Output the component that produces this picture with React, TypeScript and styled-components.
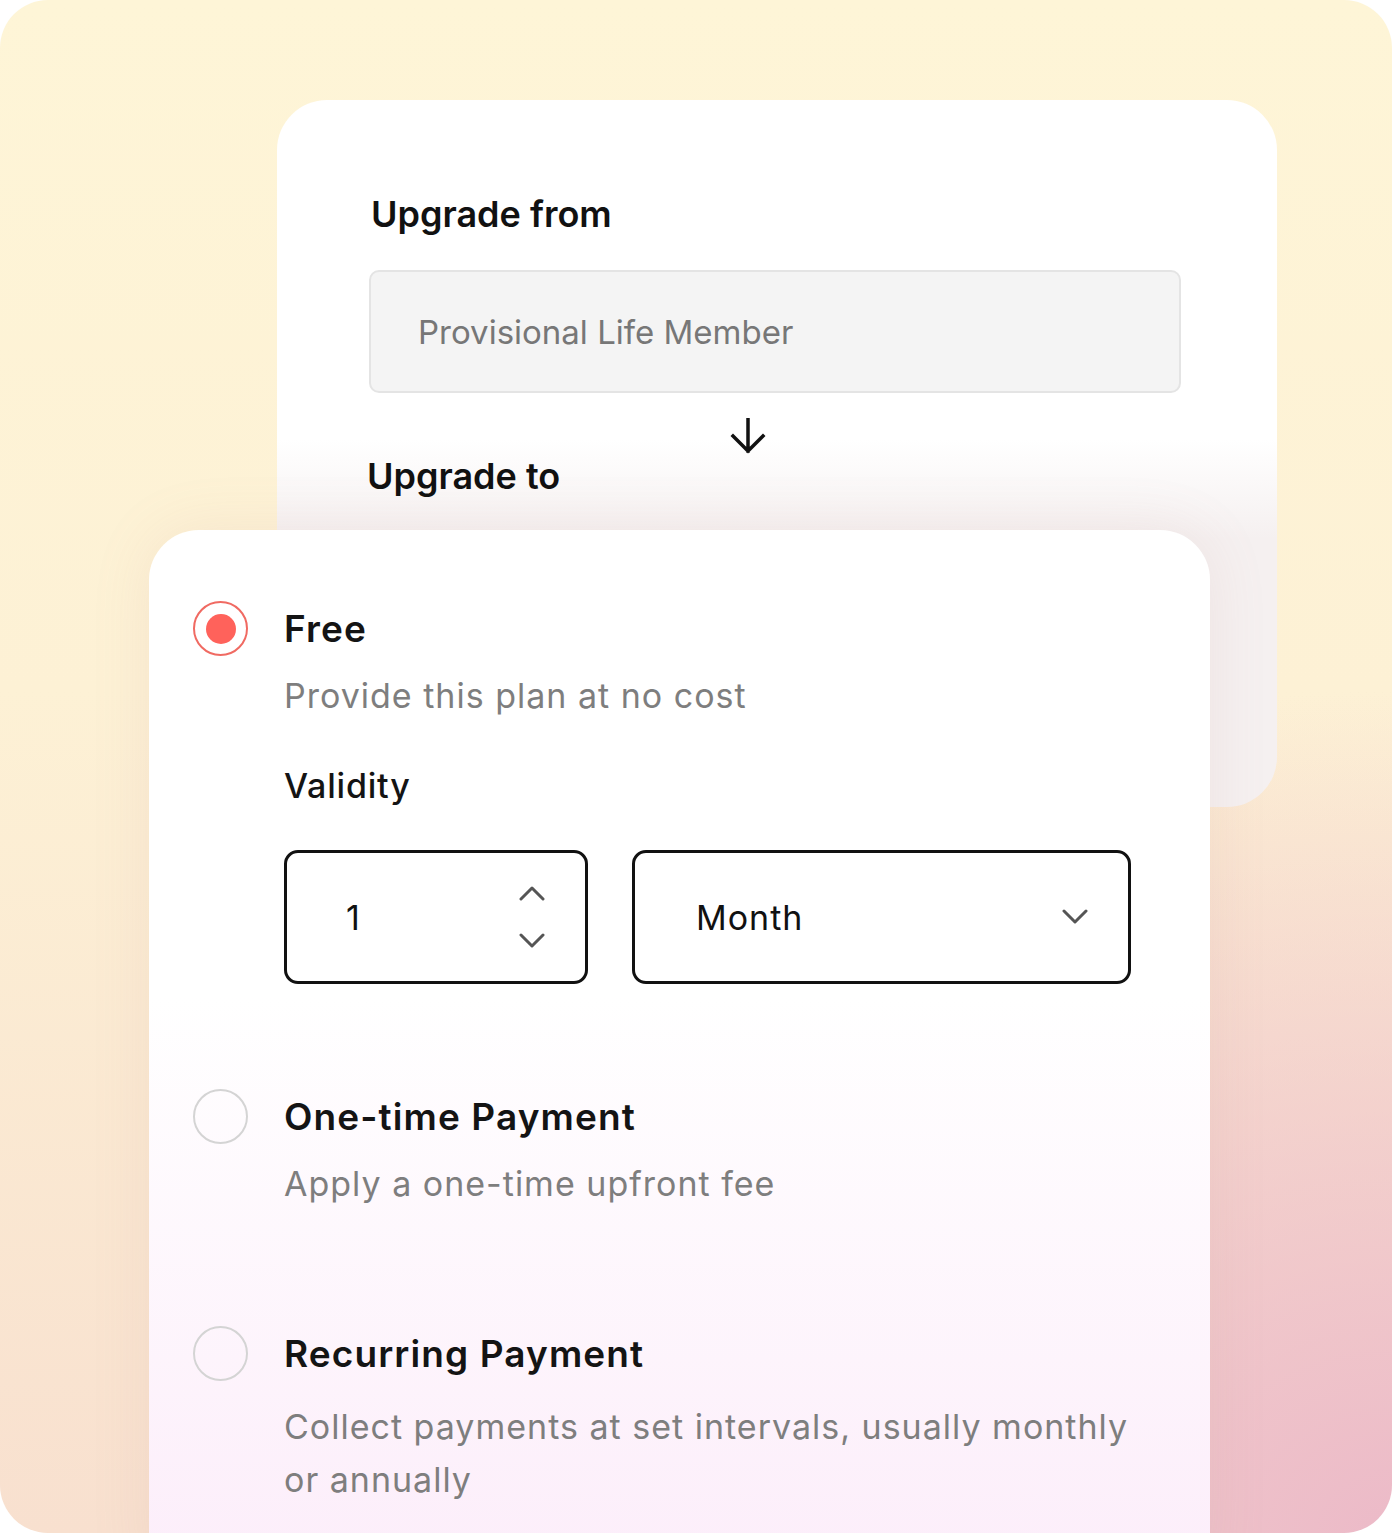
import React, { useState } from 'react'
import styled, { createGlobalStyle } from 'styled-components'

const GlobalStyle = createGlobalStyle`
  body {
    margin: 0;
    background: #ffffff;
    font-family: Inter, 'Noto Sans', sans-serif;
  }
`

const Frame = styled.div`
  width: 1392px;
  height: 1533px;
  border-radius: 48px;
  overflow: hidden;
  padding-top: 100px;
  box-sizing: border-box;
  background: radial-gradient(
      ellipse 70% 55% at 100% 100%,
      #ecbac8 0%,
      rgba(236, 186, 200, 0) 100%
    ),
    linear-gradient(180deg, #fef5d7 0%, #fdf1d5 45%, #f8e0cf 100%);
`

const BackCard = styled.section`
  margin-left: 277px;
  width: 1000px;
  height: 707px;
  box-sizing: border-box;
  padding: 92px 0 0 92px;
  border-radius: 50px;
  background: linear-gradient(180deg, #ffffff 0%, #ffffff 48%, #f5f0f0 62%, #f5f0f0 100%);
`

const Heading = styled.h2<{ $shift?: number }>`
  margin: 0;
  margin-left: ${({ $shift = 2 }) => $shift}px;
  font-size: 36px;
  line-height: 44px;
  font-weight: 600;
  color: #111111;
`

const ReadOnlyField = styled.div`
  margin-top: 34px;
  width: 812px;
  height: 123px;
  box-sizing: border-box;
  display: flex;
  align-items: center;
  padding-left: 47px;
  border: 2px solid #e4e4e4;
  border-radius: 10px;
  background: #f4f4f4;
  font-size: 33px;
  color: #777777;
`

const ArrowRow = styled.div`
  margin-top: 25px;
  margin-bottom: 2px;
  height: 34px;
  padding-left: 361px;
  display: flex;
`

const FrontCard = styled.section`
  position: relative;
  z-index: 1;
  margin-top: -277px;
  margin-left: 149px;
  width: 1061px;
  height: 1060px;
  box-sizing: border-box;
  padding: 71px 0 0 44px;
  border-radius: 50px;
  background: linear-gradient(180deg, #ffffff 0%, #ffffff 44%, #fcedfa 100%);
  box-shadow: 0 0 60px rgba(190, 140, 130, 0.12);
`

const Option = styled.div<{ $gap: number }>`
  display: grid;
  grid-template-columns: 55px 1fr;
  column-gap: 36px;
  margin-top: ${({ $gap }) => $gap}px;
`

const Radio = styled.button<{ $checked: boolean }>`
  width: 55px;
  height: 55px;
  padding: 0;
  border-radius: 50%;
  box-sizing: border-box;
  border: 2.5px solid ${({ $checked }) => ($checked ? '#f06a62' : '#d4d4d4')};
  background: transparent;
  display: flex;
  align-items: center;
  justify-content: center;
  cursor: pointer;

  &::after {
    content: '';
    width: 30px;
    height: 30px;
    border-radius: 50%;
    background: #ff625b;
    display: ${({ $checked }) => ($checked ? 'block' : 'none')};
  }
`

const OptionTitle = styled.div`
  align-self: center;
  font-size: 37px;
  line-height: 44px;
  font-weight: 600;
  letter-spacing: 1.1px;
  color: #141414;
`

const OptionBody = styled.div`
  grid-column: 2;
`

const Description = styled.p<{ $top: number }>`
  margin: ${({ $top }) => $top}px 0 0;
  font-size: 34px;
  line-height: 53px;
  letter-spacing: 1px;
  color: #7e7e7e;
  max-width: 860px;
`

const FieldLabel = styled.div`
  margin-top: 42px;
  font-size: 34px;
  line-height: 44px;
  font-weight: 500;
  letter-spacing: 0.8px;
  color: #141414;
`

const FieldRow = styled.div`
  margin-top: 42px;
  display: flex;
  gap: 44px;
`

const Box = styled.div<{ $width: number }>`
  width: ${({ $width }) => $width}px;
  height: 134px;
  box-sizing: border-box;
  border: 3px solid #111111;
  border-radius: 14px;
  display: flex;
  align-items: center;
  justify-content: space-between;
  font-size: 34px;
  letter-spacing: 1px;
  color: #111111;
`

const NumberValue = styled.span`
  padding-left: 59px;
`

const SelectValue = styled.span`
  padding-left: 61px;
`

const Stepper = styled.div`
  display: flex;
  flex-direction: column;
  gap: 32px;
  padding-right: 40px;
`

const Caret = styled.svg`
  display: block;
`

const ChevronUp = () => (
  <Caret width="26" height="16" viewBox="0 0 26 16" fill="none">
    <path d="M2 14 L13 3 L24 14" stroke="#555" strokeWidth="3" strokeLinecap="round" strokeLinejoin="round" />
  </Caret>
)

const ChevronDown = () => (
  <Caret width="26" height="16" viewBox="0 0 26 16" fill="none">
    <path d="M2 2 L13 13 L24 2" stroke="#555" strokeWidth="3" strokeLinecap="round" strokeLinejoin="round" />
  </Caret>
)

const SelectCaret = styled.span`
  padding-right: 40px;
`

const ArrowDown = () => (
  <svg width="36" height="36" viewBox="0 0 36 36" fill="none">
    <path d="M18 1 V33 M3 18 L18 33 L33 18" stroke="#111" strokeWidth="3.5" strokeLinecap="square" />
  </svg>
)

type PlanKind = 'free' | 'once' | 'recurring'

const App = () => {
  const [plan, setPlan] = useState<PlanKind>('free')

  return (
    <>
      <GlobalStyle />
      <Frame>
        <BackCard>
          <Heading>Upgrade from</Heading>
          <ReadOnlyField>Provisional Life Member</ReadOnlyField>
          <ArrowRow>
            <ArrowDown />
          </ArrowRow>
          <Heading $shift={-2}>Upgrade to</Heading>
        </BackCard>

        <FrontCard>
          <Option $gap={0}>
            <Radio $checked={plan === 'free'} onClick={() => setPlan('free')} aria-label="Free" />
            <OptionTitle>Free</OptionTitle>
            <OptionBody>
              <Description $top={13}>Provide this plan at no cost</Description>
              <FieldLabel>Validity</FieldLabel>
              <FieldRow>
                <Box $width={304}>
                  <NumberValue>1</NumberValue>
                  <Stepper>
                    <ChevronUp />
                    <ChevronDown />
                  </Stepper>
                </Box>
                <Box $width={499}>
                  <SelectValue>Month</SelectValue>
                  <SelectCaret>
                    <ChevronDown />
                  </SelectCaret>
                </Box>
              </FieldRow>
            </OptionBody>
          </Option>

          <Option $gap={105}>
            <Radio $checked={plan === 'once'} onClick={() => setPlan('once')} aria-label="One-time Payment" />
            <OptionTitle>One-time Payment</OptionTitle>
            <OptionBody>
              <Description $top={13}>Apply a one-time upfront fee</Description>
            </OptionBody>
          </Option>

          <Option $gap={116}>
            <Radio $checked={plan === 'recurring'} onClick={() => setPlan('recurring')} aria-label="Recurring Payment" />
            <OptionTitle>Recurring Payment</OptionTitle>
            <OptionBody>
              <Description $top={19}>
                Collect payments at set intervals, usually monthly or annually
              </Description>
            </OptionBody>
          </Option>
        </FrontCard>
      </Frame>
    </>
  )
}

export default App
